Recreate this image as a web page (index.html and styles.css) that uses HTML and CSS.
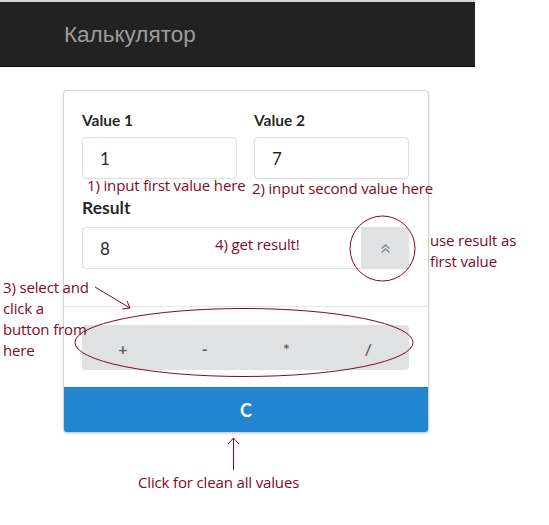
FILE: index.html
```html
<!DOCTYPE html>
<html lang="ru">
<head>
<meta charset="utf-8">
<title>Калькулятор</title>
<link rel="stylesheet" href="styles.css">
</head>
<body>
<div class="page">
  <header class="navbar"><span class="brand">Калькулятор</span></header>

  <main class="card">
    <div class="card-content">
      <div class="fields">
        <div class="field">
          <label class="label">Value 1</label>
          <div class="input"><span>1</span></div>
        </div>
        <div class="field">
          <label class="label">Value 2</label>
          <div class="input"><span>7</span></div>
        </div>
      </div>
      <div class="result-label">Result</div>
      <div class="input-group">
        <div class="input grow"><span>8</span></div>
        <button class="up-btn" type="button">
          <svg width="11" height="11" viewBox="0 0 10 10"><path d="M1.5 5 L5 1.8 L8.5 5 M1.5 8.6 L5 5.4 L8.5 8.6" fill="none" stroke="#8a8a8a" stroke-width="1.4"/></svg>
        </button>
      </div>
    </div>
    <div class="card-extra">
      <div class="ops">
        <button class="op" type="button">+</button>
        <button class="op" type="button">-</button>
        <button class="op" type="button">*</button>
        <button class="op" type="button">/</button>
      </div>
    </div>
    <button class="clear" type="button">C</button>
  </main>

  <div class="note n1">1) input first value here</div>
  <div class="note n2">2) input second value here</div>
  <div class="note n4">4) get result!</div>
  <div class="note n5">use result as<br>first value</div>
  <div class="note n3">3) select and<br>click a<br>button from<br>here</div>
  <div class="note n6">Click for clean all values</div>

  <svg class="marks" width="549" height="525" viewBox="0 0 549 525">
    <circle cx="382.5" cy="248.5" r="32.5" fill="none" stroke="#7f0a24" stroke-width="1"/>
    <ellipse cx="244" cy="342.5" rx="169" ry="34" fill="none" stroke="#7f0a24" stroke-width="1"/>
    <path d="M95 287 L130 308 M122 309 L130 308 L127 301" fill="none" stroke="#7f0a24" stroke-width="1"/>
    <path d="M233.5 470 L233.5 438 M228 444 L233.5 438 L239 444" fill="none" stroke="#7f0a24" stroke-width="1"/>
  </svg>
</div>
</body>
</html>
```
FILE: styles.css
```css
html, body { margin: 0; padding: 0; background: #fff; }
.page {
  position: relative;
  width: 549px;
  height: 525px;
  overflow: hidden;
  font-family: Lato, "Noto Sans", sans-serif;
}
.navbar {
  width: 475px;
  height: 67px;
  box-sizing: border-box;
  border-top: 2px solid #d4d4d4;
  border-bottom: 1px solid #080808;
  background: #222;
  display: flex;
  align-items: center;
  padding-left: 64px;
}
.brand {
  font-family: "Liberation Sans", Arial, sans-serif;
  font-size: 22.5px;
  color: #9d9d9d;
  margin-top: 2px;
}
.card {
  margin: 23px 0 0 63px;
  width: 366px;
  box-sizing: border-box;
  border: 1px solid #d4d4d5;
  border-radius: 4px;
  box-shadow: 0 1px 2px rgba(34,36,38,.15);
  overflow: hidden;
  background: #fff;
}
.card-content {
  padding: 20px 19px 37px 18px;
}
.fields {
  display: flex;
  gap: 17px;
}
.field { flex: 1; }
.label {
  display: block;
  font-weight: 700;
  font-size: 15.5px;
  color: rgba(0,0,0,.87);
  line-height: 18px;
  margin-bottom: 8px;
}
.input {
  height: 42px;
  box-sizing: border-box;
  border: 1px solid rgba(34,36,38,.15);
  border-radius: 4px;
  display: flex;
  align-items: center;
  padding: 0 17px;
  font-size: 17px;
  color: rgba(0,0,0,.87);
}
.result-label {
  margin-top: 18px;
  font-weight: 700;
  font-size: 17.5px;
  line-height: 22px;
  color: rgba(0,0,0,.87);
  margin-bottom: 8px;
}
.input-group { display: flex; }
.input.grow {
  flex: 1;
  border-radius: 4px 0 0 4px;
  border-right: none;
}
.up-btn {
  width: 48px;
  height: 42px;
  border: none;
  background: #e0e1e2;
  border-radius: 0 4px 4px 0;
  display: flex;
  align-items: center;
  justify-content: center;
  padding: 0;
}
.card-extra {
  border-top: 1px solid #e8e8e8;
  padding: 18px 19px 17px 18px;
}
.ops {
  display: flex;
  background: #e0e1e2;
  border-radius: 4px;
  height: 45px;
}
.op {
  flex: 1;
  border: none;
  background: transparent;
  font-family: Lato, sans-serif;
  font-size: 16px;
  font-weight: 700;
  color: rgba(0,0,0,.6);
  padding: 0;
  margin-top: 2px;
}
.clear {
  display: block;
  width: 100%;
  height: 45px;
  border: none;
  background: #2185d0;
  color: #fff;
  font-family: Lato, sans-serif;
  font-weight: 700;
  font-size: 18px;
  padding: 0;
}
.note {
  position: absolute;
  font-family: "Open Sans", "Noto Sans", sans-serif;
  font-size: 15px;
  line-height: 21px;
  color: #7f0a24;
  white-space: nowrap;
  letter-spacing: -0.15px;
}
.n1 { left: 87px; top: 175px; }
.n2 { left: 252px; top: 178px; }
.n4 { left: 215px; top: 234px; }
.n5 { left: 430px; top: 230px; }
.n3 { left: 3px; top: 277px; }
.n6 { left: 138px; top: 472px; }
.marks {
  position: absolute;
  left: 0;
  top: 0;
  pointer-events: none;
}
```
